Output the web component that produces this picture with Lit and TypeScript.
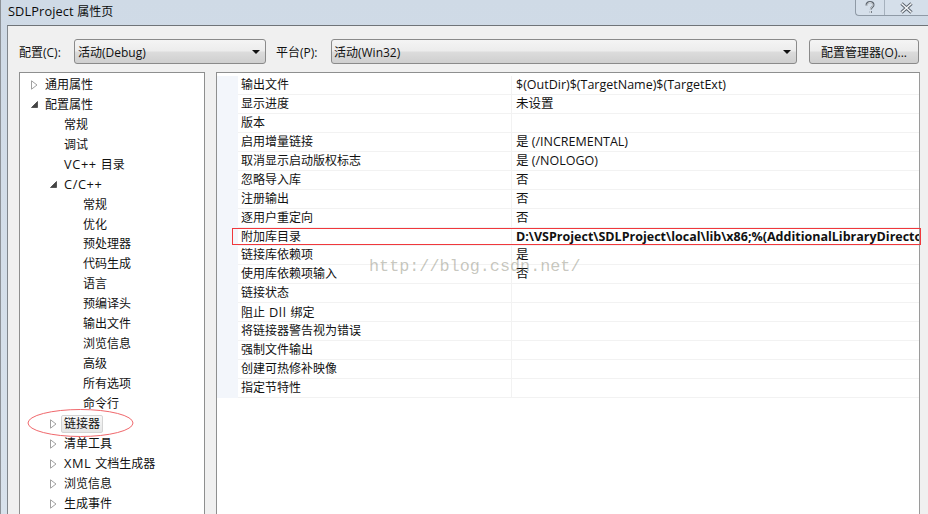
import { LitElement, html, css, svg } from "lit";
import { customElement } from "lit/decorators.js";

type T = { t: string; d: number; a?: "c" | "o"; sel?: boolean };
const tree: T[] = [
  { t: "通用属性", d: 0, a: "c" },
  { t: "配置属性", d: 0, a: "o" },
  { t: "常规", d: 1 },
  { t: "调试", d: 1 },
  { t: "VC++ 目录", d: 1 },
  { t: "C/C++", d: 1, a: "o" },
  { t: "常规", d: 2 },
  { t: "优化", d: 2 },
  { t: "预处理器", d: 2 },
  { t: "代码生成", d: 2 },
  { t: "语言", d: 2 },
  { t: "预编译头", d: 2 },
  { t: "输出文件", d: 2 },
  { t: "浏览信息", d: 2 },
  { t: "高级", d: 2 },
  { t: "所有选项", d: 2 },
  { t: "命令行", d: 2 },
  { t: "链接器", d: 1, a: "c", sel: true },
  { t: "清单工具", d: 1, a: "c" },
  { t: "XML 文档生成器", d: 1, a: "c" },
  { t: "浏览信息", d: 1, a: "c" },
  { t: "生成事件", d: 1, a: "c" },
];
const props: [string, string, boolean?][] = [
  ["输出文件", "$(OutDir)$(TargetName)$(TargetExt)"],
  ["显示进度", "未设置"],
  ["版本", ""],
  ["启用增量链接", "是 (/INCREMENTAL)"],
  ["取消显示启动版权标志", "是 (/NOLOGO)"],
  ["忽略导入库", "否"],
  ["注册输出", "否"],
  ["逐用户重定向", "否"],
  ["附加库目录", "D:\\VSProject\\SDLProject\\local\\lib\\x86;%(AdditionalLibraryDirectories)", true],
  ["链接库依赖项", "是"],
  ["使用库依赖项输入", "否"],
  ["链接状态", ""],
  ["阻止 Dll 绑定", ""],
  ["将链接器警告视为错误", ""],
  ["强制文件输出", ""],
  ["创建可热修补映像", ""],
  ["指定节特性", ""],
];

const mixed = (s: string) =>
  s.split(/([\x20-\x7e]+)/).map((p) =>
    /^[\x20-\x7e]+$/.test(p) ? html`<span class="lat">${p}</span>` : p
  );

@customElement("app-root")
export class AppRoot extends LitElement {
  static styles = css`
    :host {
      display: block;
      width: 928px;
      height: 514px;
      overflow: hidden;
      position: relative;
      background: #d8e2ec;
      font-family: "Open Sans", "Noto Sans CJK SC", sans-serif;
      font-size: 12px;
      color: #111;
    }
    .lat { font-size: 12.8px; letter-spacing: 0.6px; }
    .frame {
      height: 514px;
      display: flex;
      flex-direction: column;
      border-left: 1px solid #8d9298;
      background: linear-gradient(180deg, #cfdae6 0, #d8e2ec 100%);
      box-sizing: border-box;
    }
    .title {
      height: 25px;
      flex: none;
      display: flex;
      align-items: center;
      justify-content: space-between;
      padding: 0 0 0 7px;
      font-size: 12px;
      color: #0c0c0c;
    }
    .title span.cap { position: relative; top: -2px; }
    .title .lat { letter-spacing: 0.1px; }
    .sysbtns {
      display: flex;
      align-self: flex-start;
      height: 15px;
      border: 1px solid #8f9aa6;
      border-top: none;
      border-right: none;
      border-radius: 0 0 0 4px;
      background: #d5dfea;
    }
    .sysbtns div {
      display: flex;
      align-items: center;
      justify-content: center;
    }
    .sysbtns .q { width: 28px; border-right: 1px solid #a6b1bd; }
    .sysbtns .x { width: 43px; }
    .body {
      flex: 1;
      margin-left: 6px;
      background: #f0f0f0;
      border-top: 1px solid #6f7478;
      border-left: 1px solid #80868c;
      padding: 13px 8px 0 11px;
      display: flex;
      flex-direction: column;
      min-height: 0;
    }
    .toolbar {
      display: flex;
      align-items: center;
      height: 25px;
      flex: none;
    }
    .lbl { width: 55px; flex: none; white-space: nowrap; }
    .combo {
      box-sizing: border-box;
      height: 25px;
      border: 1px solid #8a8a8a;
      border-radius: 3px;
      background: linear-gradient(180deg, #f4f4f4 0, #ececec 48%, #dcdcdc 52%, #cfcfcf 100%);
      display: flex;
      align-items: center;
      justify-content: space-between;
      padding: 0 4px 0 3px;
    }
    .c1 { width: 192px; }
    .lbl2 { width: 55px; margin-left: 10px; flex: none; white-space: nowrap; }
    .c2 { width: 466px; padding-left: 2px; }
    .caret {
      width: 0;
      height: 0;
      border-left: 4px solid transparent;
      border-right: 4px solid transparent;
      border-top: 4px solid #111;
      margin-right: 1px;
    }
    .mgr {
      box-sizing: border-box;
      width: 110px;
      height: 25px;
      margin-left: 12px;
      border: 1px solid #8a8a8a;
      border-radius: 3px;
      background: linear-gradient(180deg, #f4f4f4 0, #ececec 48%, #dcdcdc 52%, #cfcfcf 100%);
      display: flex;
      align-items: center;
      justify-content: center;
      white-space: nowrap;
    }
    .main {
      flex: 1;
      display: flex;
      gap: 11px;
      margin-top: 8px;
      min-height: 0;
    }
    .tree {
      width: 186px;
      flex: none;
      box-sizing: border-box;
      background: #fff;
      border: 1px solid #8e8f8f;
      border-bottom: none;
      padding-top: 2px;
    }
    .node {
      height: 19.95px;
      display: flex;
      align-items: center;
      white-space: nowrap;
    }
    .arrow {
      width: 12px;
      display: flex;
      justify-content: center;
      flex: none;
    }
    .txt { padding: 0 3px 0 5px; line-height: 16px; }
    .sel {
      background: linear-gradient(180deg, #f8f8f8, #e6e6e6);
      border: 1px solid #d4d4d4;
      border-radius: 2px;
      padding: 0 2px;
      margin-left: 2px;
    }
    .props {
      width: 704px;
      flex: none;
      box-sizing: border-box;
      background: #fff;
      border: 1px solid #8e8f8f;
      border-right: 1px solid #9a9a9a;
      border-bottom: none;
      padding-top: 3px;
    }
    .row {
      height: 18.95px;
      display: flex;
      box-sizing: border-box;
      line-height: 18px;
      white-space: nowrap;
    }
    .gut { width: 21px; flex: none; background: #f3f6fb; }
    .name {
      width: 274px;
      flex: none;
      padding-left: 3px;
      box-sizing: border-box;
      border-bottom: 1px solid #f2f2f2;
      border-right: 1px solid #f2f2f2;
    }
    .val {
      flex: 1;
      min-width: 0;
      overflow: hidden;
      padding-left: 4px;
      font-size: 12.5px;
      border-bottom: 1px solid #f2f2f2;
    }
    .row.mark { position: relative; }
    .row.mark::after {
      content: "";
      position: absolute;
      left: 15px;
      top: 0;
      right: -2px;
      bottom: 1px;
      border: 1px solid #f0383c;
      pointer-events: none;
    }
    .bold { font-weight: 700; }
    .ellipse { position: absolute; left: 26px; top: 408px; pointer-events: none; }
    .wm {
      position: absolute;
      left: 369px;
      top: 256px;
      font-family: "Liberation Mono", monospace;
      font-size: 16.8px;
      color: rgba(120, 120, 100, 0.42);
      white-space: nowrap;
      pointer-events: none;
      line-height: 22px;
    }
  `;

  private arrow(a?: "c" | "o") {
    if (a === "c")
      return html`<svg width="7" height="10" viewBox="0 0 7 10"><path d="M.5.8 6 5 .5 9.2Z" fill="#fff" stroke="#a0a0a0"/></svg>`;
    if (a === "o")
      return html`<svg width="7" height="7" viewBox="0 0 7 7"><path d="M6.5.5V6.5H.5Z" fill="#444" stroke="#444" stroke-width=".8"/></svg>`;
    return "";
  }

  render() {
    return html`
      <div class="frame">
        <div class="title">
          <span class="cap">${mixed("SDLProject ")}属性页</span>
          <div class="sysbtns">
            <div class="q"><svg width="12" height="13" viewBox="0 0 12 13"><path d="M2.5 4.5C2.5 2 4 1 6 1s3.5 1 3.5 3C9.5 6 6.8 6 6.8 8.5M6.8 10v2" fill="none" stroke="#5e6670" stroke-width="2"/><path d="M3 4.5C3 2.5 4.5 1.5 6 1.5S9 2.5 9 4C9 5.800 6.500 6 6.500 8.500M6.500 10v2" fill="none" stroke="#f5f7f9" stroke-width=".8"/></svg></div>
            <div class="x"><svg width="15" height="12" viewBox="0 0 15 12"><path d="M2.500 1.500 12.500 10.500M12.500 1.500 2.500 10.500" stroke="#5e6670" stroke-width="3.400"/><path d="M2.500 1.500 12.500 10.500M12.500 1.500 2.500 10.500" stroke="#f5f7f9" stroke-width="1.400"/></svg></div>
          </div>
        </div>
        <div class="body">
          <div class="toolbar">
            <div class="lbl">配置(C):</div>
            <div class="combo c1"><span>活动(Debug)</span><i class="caret"></i></div>
            <div class="lbl2">平台(P):</div>
            <div class="combo c2"><span>活动(Win32)</span><i class="caret"></i></div>
            <div class="mgr">配置管理器(O)...</div>
          </div>
          <div class="main">
            <div class="tree">
              ${tree.map(
                (n) => html`<div class="node" style="padding-left:${8 + n.d * 19}px">
                  <span class="arrow">${this.arrow(n.a)}</span>
                  <span class="txt ${n.sel ? "sel" : ""}">${mixed(n.t)}</span>
                </div>`
              )}
            </div>
            <div class="props">
              ${props.map(
                ([k, v, b]) => html`<div class="row ${b ? "mark" : ""}">
                  <div class="gut"></div>
                  <div class="name">${mixed(k)}</div>
                  <div class="val ${b ? "bold" : ""}">${v}</div>
                </div>`
              )}
            </div>
          </div>
        </div>
      </div>
      <svg class="ellipse" width="110" height="30" viewBox="0 0 110 30">
        ${svg`<ellipse cx="54.500" cy="15" rx="52.500" ry="13.500" fill="none" stroke="#f0686c" stroke-width="1"/>`}
      </svg>
      <div class="wm">http://blog.csdn.net/</div>
    `;
  }
}
